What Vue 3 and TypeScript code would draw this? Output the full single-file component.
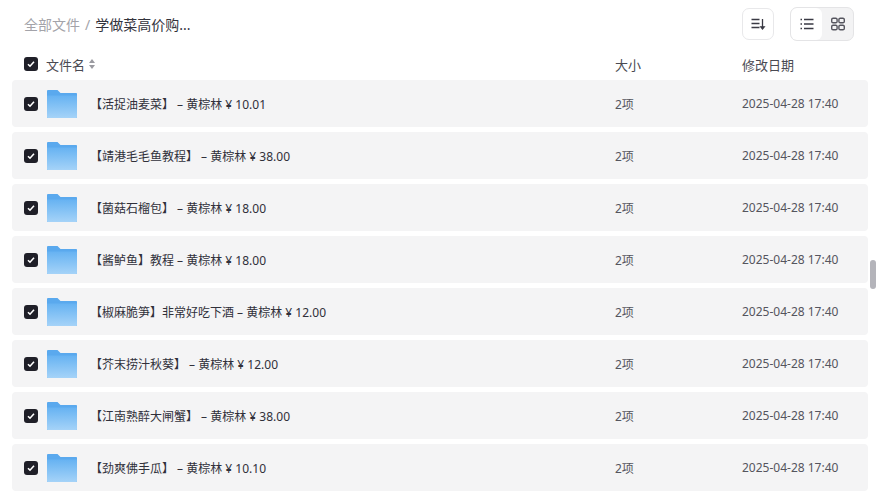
<script setup lang="ts">
interface Row { name: string }
const rows: Row[] = [
  { name: '【活捉油麦菜】 – 黄棕林 ¥ 10.01' },
  { name: '【靖港毛毛鱼教程】 – 黄棕林 ¥ 38.00' },
  { name: '【菌菇石榴包】 – 黄棕林 ¥ 18.00' },
  { name: '【酱鲈鱼】教程 – 黄棕林 ¥ 18.00' },
  { name: '【椒麻脆笋】非常好吃下酒 – 黄棕林 ¥ 12.00' },
  { name: '【芥末捞汁秋葵】 – 黄棕林 ¥ 12.00' },
  { name: '【江南熟醉大闸蟹】 – 黄棕林 ¥ 38.00' },
  { name: '【劲爽佛手瓜】 – 黄棕林 ¥ 10.10' },
]
</script>

<template>
  <div class="page">
    <div class="top">
      <div class="crumbs">
        <span class="root">全部文件</span>
        <span class="sep">/</span>
        <span class="cur">学做菜高价购...</span>
      </div>
      <div class="tools">
        <button class="sort-btn" aria-label="排序">
          <svg width="16" height="16" viewBox="0 0 16 16" fill="none" stroke="#3a3a44" stroke-width="1.3">
            <path d="M1.5 3.5h8M1.5 7.5h8M1.5 11.5h8" />
            <path d="M12.5 3v9" />
            <path d="M10.8 10.8l1.7 2.2 1.7-2.2z" fill="#3a3a44" />
          </svg>
        </button>
        <div class="switch">
          <span class="seg on">
            <svg width="16" height="16" viewBox="0 0 16 16" fill="none" stroke="#3a3a44" stroke-width="1.3">
              <path d="M5 3.5h9.5M5 8h9.5M5 12.5h9.5" />
              <path d="M1.5 3.5h1.5M1.5 8h1.5M1.5 12.5h1.5" />
            </svg>
          </span>
          <span class="seg">
            <svg width="16" height="16" viewBox="0 0 16 16" fill="none" stroke="#55555e" stroke-width="1.4">
              <rect x="1.7" y="2.2" width="5.4" height="4.6" rx="1.4" />
              <rect x="8.9" y="2.2" width="5.4" height="4.6" rx="1.4" />
              <rect x="1.7" y="9.2" width="5.4" height="4.6" rx="1.4" />
              <rect x="8.9" y="9.2" width="5.4" height="4.6" rx="1.4" />
            </svg>
          </span>
        </div>
      </div>
    </div>

    <div class="head">
      <span class="check">
        <svg width="8" height="8" viewBox="0 0 8 8" fill="none" stroke="#fff" stroke-width="1.6"><path d="M1 4.2l2 2 4-4.4" /></svg>
      </span>
      <span class="h-name">文件名</span>
      <svg class="caret" width="8" height="12" viewBox="0 0 8 12" fill="#9a9aa0"><path d="M4 1l3 4H1zM4 11L1 7h6z" /></svg>
      <span class="h-size">大小</span>
      <span class="h-date">修改日期</span>
    </div>

    <div class="list">
      <div v-for="r in rows" :key="r.name" class="row">
        <span class="check">
          <svg width="8" height="8" viewBox="0 0 8 8" fill="none" stroke="#fff" stroke-width="1.6"><path d="M1 4.2l2 2 4-4.4" /></svg>
        </span>
        <svg class="folder" width="30" height="28" viewBox="0 0 30 28">
          <defs>
            <linearGradient id="fg" x1="0" y1="0" x2="0" y2="1">
              <stop offset="0" stop-color="#66b2f2" />
              <stop offset="1" stop-color="#a5d3f8" />
            </linearGradient>
          </defs>
          <path d="M0 1.2C0 .5.5 0 1.2 0h9.3l3 3H29c.6 0 1 .4 1 1v23c0 .6-.4 1-1 1H1c-.6 0-1-.4-1-1z" fill="#5aa9ee" />
          <path d="M0 5.5h30V27c0 .6-.4 1-1 1H1c-.6 0-1-.4-1-1z" fill="url(#fg)" />
        </svg>
        <span class="name">{{ r.name }}</span>
        <span class="size">2项</span>
        <span class="date">2025-04-28 17:40</span>
      </div>
    </div>

    <div class="thumb"></div>
  </div>
</template>

<style>
html, body { margin: 0; background: #fff; overflow: hidden; }
</style>

<style scoped>
.page {
  position: relative;
  width: 878px;
  height: 495px;
  overflow: hidden;
  background: #fff;
  font-family: "Noto Sans", "Noto Sans CJK SC", sans-serif;
  color: #2f2f38;
}
.top {
  display: flex;
  align-items: center;
  justify-content: space-between;
  height: 48px;
  padding: 0 24px;
}
.crumbs { display: flex; align-items: center; font-size: 14px; }
.root { color: #a3a3a9; }
.sep { color: #a3a3a9; margin: 0 5px; }
.cur { color: #33333c; }
.tools { display: flex; align-items: center; gap: 16px; }
.sort-btn {
  width: 32px;
  height: 32px;
  padding: 0;
  display: flex;
  align-items: center;
  justify-content: center;
  background: #fff;
  border: 1px solid #e8e8ea;
  border-radius: 7px;
}
.switch {
  display: flex;
  width: 62px;
  height: 32px;
  background: #f3f3f4;
  border: 1px solid #e4e4e6;
  border-radius: 7px;
  overflow: hidden;
}
.seg { flex: 1; display: flex; align-items: center; justify-content: center; }
.seg.on { background: #fff; border-radius: 6px; }
.head {
  display: flex;
  align-items: center;
  height: 32px;
  padding-left: 24px;
  font-size: 13px;
  color: #4a4a52;
}
.h-name { margin-left: 8px; }
.caret { margin-left: 3px; }
.h-size { position: absolute; left: 615px; }
.h-date { position: absolute; left: 742px; }
.list {
  display: flex;
  flex-direction: column;
  gap: 5px;
  margin: 0 10px 0 12px;
}
.row {
  flex: none;
  display: flex;
  align-items: center;
  height: 47px;
  padding-left: 12px;
  background: #f4f4f5;
  border-radius: 4px;
  font-size: 12px;
}
.check {
  flex: none;
  display: flex;
  align-items: center;
  justify-content: center;
  width: 14px;
  height: 14px;
  background: #1f1f28;
  border-radius: 3px;
}
.folder { flex: none; margin-left: 9px; }
.name { margin-left: 13px; color: #30303a; }
.size { position: absolute; left: 615px; color: #55555e; }
.date { position: absolute; left: 742px; color: #55555e; }
.thumb {
  position: absolute;
  left: 870px;
  top: 260px;
  width: 6px;
  height: 29px;
  border-radius: 3px;
  background: #b4b4ba;
}
</style>
